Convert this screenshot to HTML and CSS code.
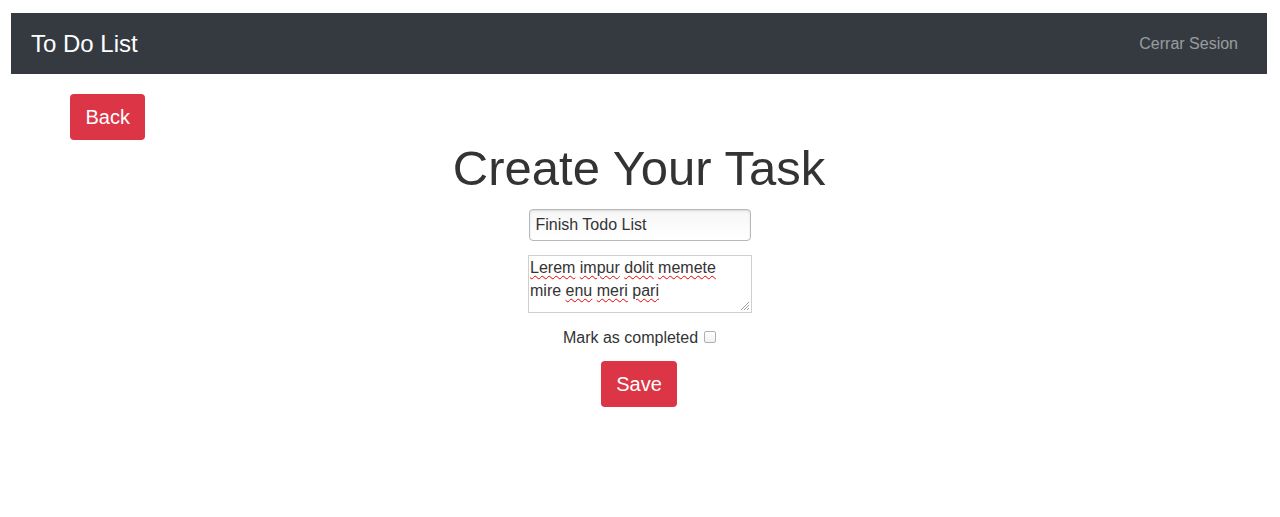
FILE: index.html
```html
<!DOCTYPE html>
<html lang="es">
<head>
<meta charset="utf-8">
<title>To Do List</title>
<link rel="stylesheet" href="styles.css">
</head>
<body>
<nav class="navbar">
  <span class="brand">To Do List</span>
  <a class="nav-link" href="#">Cerrar Sesion</a>
</nav>
<main class="page">
  <div class="back-row">
    <button class="btn btn-danger">Back</button>
  </div>
  <h1 class="title">Create Your Task</h1>
  <form class="task-form">
    <input class="title-input" type="text" value="Finish Todo List">
    <div class="desc" role="textbox">
      <span class="sp">Lerem</span> <span class="sp">impur</span> <span class="sp">dolit</span> <span class="sp">memete</span><br>mire <span class="sp">enu</span> <span class="sp">meri</span> <span class="sp">pari</span>
      <svg class="grip" width="12" height="12" viewBox="0 0 12 12"><path d="M11 3 L3 11 M11 6 L6 11 M11 9 L9 11" stroke="#a0a0a0" stroke-width="1"/></svg>
    </div>
    <label class="check">Mark as completed <input type="checkbox"></label>
    <button type="button" class="btn btn-danger">Save</button>
  </form>
</main>
</body>
</html>
```
FILE: styles.css
```css
* { box-sizing: border-box; }
html, body { margin: 0; padding: 0; background: #fff; }
body {
  font-family: "Liberation Sans", Arial, sans-serif;
  color: #333;
  padding: 13px 13px 0 11px;
}
.navbar {
  background: #343a40;
  height: 61px;
  display: flex;
  align-items: center;
  justify-content: space-between;
  padding: 0 29px 0 20px;
}
.brand {
  color: #fff;
  font-size: 24px;
  line-height: 30px;
}
.nav-link {
  color: rgba(255,255,255,0.5);
  text-decoration: none;
  font-size: 16px;
}
.page { display: flex; flex-direction: column; }
.back-row { padding: 20px 0 0 59px; }
.btn {
  font-family: "Liberation Sans", Arial, sans-serif;
  font-size: 20px;
  line-height: 30px;
  padding: 8px 15.5px;
  border: 0;
  border-radius: 4px;
  cursor: pointer;
}
.btn-danger { background: #dc3545; color: #fff; }
.title {
  margin: 0 0 12px;
  text-align: center;
  font-size: 49px;
  font-weight: 400;
  line-height: 57px;
  color: #333;
}
.task-form {
  display: flex;
  flex-direction: column;
  align-items: center;
}
.title-input {
  width: 222px;
  height: 32px;
  margin-left: 1px;
  font-family: "Liberation Sans", Arial, sans-serif;
  font-size: 16px;
  color: #333;
  padding: 0 6px;
  border: 1px solid #b8b8b8;
  border-radius: 4px;
  background: linear-gradient(#f6f6f6, #fff);
  box-shadow: inset 0 1px 2px rgba(0,0,0,0.12);
}
.desc {
  position: relative;
  margin-top: 14px;
  margin-left: 2px;
  width: 224px;
  height: 58px;
  border: 1px solid #cfcfcf;
  padding: 0 1px;
  font-size: 16px;
  line-height: 23px;
  color: #333;
  text-align: left;
}
.sp {
  text-decoration: underline wavy #e00;
  text-decoration-thickness: 1px;
  text-underline-offset: 2px;
}
.grip { position: absolute; right: 1px; bottom: 1px; }
.check {
  margin-top: 15px;
  font-size: 16px;
  line-height: 20px;
  color: #333;
  display: flex;
  align-items: center;
  gap: 3px;
  margin-left: 1px;
}
.check input {
  appearance: none;
  -webkit-appearance: none;
  margin: 0 0 3px 3px;
  width: 12px;
  height: 12px;
  border: 1px solid #b0b0b0;
  border-radius: 2px;
  background: linear-gradient(#fff, #f0f0f0);
}
.task-form .btn { margin-top: 13px; }
```
